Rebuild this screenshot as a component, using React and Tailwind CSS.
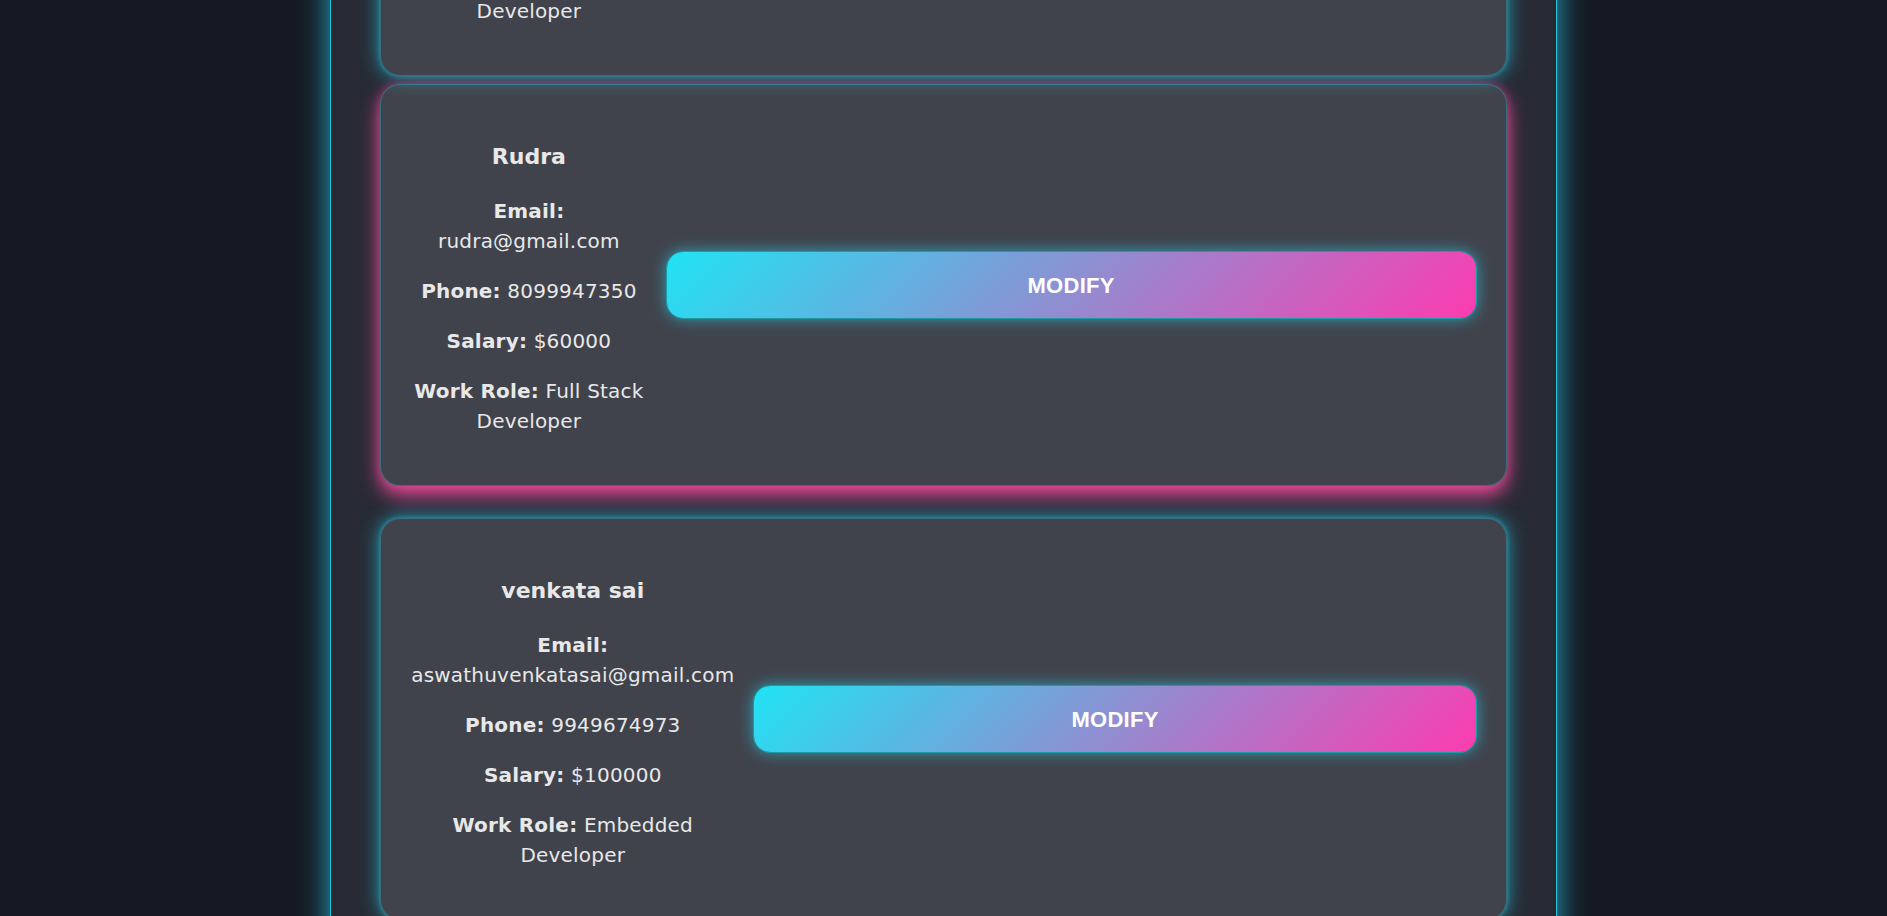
import React from "react";

const employees = [
  {
    name: "Aarav",
    email: "aarav@gmail.com",
    phone: "9876543210",
    salary: "$75000",
    role: "Full Stack Developer",
  },
  {
    name: "Rudra",
    email: "rudra@gmail.com",
    phone: "8099947350",
    salary: "$60000",
    role: "Full Stack Developer",
    active: true,
  },
  {
    name: "venkata sai",
    email: "aswathuvenkatasai@gmail.com",
    phone: "9949674973",
    salary: "$100000",
    role: "Embedded Developer",
  },
];

function Field({ label, value }) {
  return (
    <p className="text-[20px] leading-[30px] tracking-[0.2px]">
      <strong className="font-bold">{label}:</strong> {value}
    </p>
  );
}

function EmployeeCard({ employee }) {
  const active = employee.active;
  return (
    <div
      className={`flex items-center gap-5 rounded-[20px] border border-[#22d3ee]/30 bg-white/[0.12] p-[30px] ${
        active
          ? "-translate-y-3 shadow-[0_9px_20px_rgba(236,72,153,1),0_0_8px_rgba(236,72,153,0.45)]"
          : "shadow-[0_0_20px_rgba(34,211,238,0.7),0_0_4px_rgba(34,211,238,0.5)]"
      }`}
    >
      <div className="flex flex-col gap-5 pt-[23px] pb-[19px] text-center text-[#e8e8e8]">
        <h3 className="text-[22px] font-bold leading-[38px]">{employee.name}</h3>
        <Field label="Email" value={employee.email} />
        <Field label="Phone" value={employee.phone} />
        <Field label="Salary" value={employee.salary} />
        <Field label="Work Role" value={employee.role} />
      </div>
      <button
        type="button"
        className="h-[66px] w-[110%] rounded-[16px] bg-[linear-gradient(135deg,#20e3f4,#fd3bb0)] font-['Liberation_Sans',Arial,sans-serif] text-[22px] font-bold tracking-[0.3px] text-white shadow-[0_0_16px_rgba(34,211,238,0.7)] outline outline-1 outline-[#1aa8b0]/70"
      >
        MODIFY
      </button>
    </div>
  );
}

export default function App() {
  return (
    <div className="h-[916px] overflow-hidden bg-[#161923] font-['DejaVu_Sans',sans-serif]">
      <div className="mx-auto -mt-[346px] flex w-[65%] flex-col gap-5 border-x border-[#22c5d6] bg-[#272a34] px-[49px] pt-5 pb-10 shadow-[0_0_28px_rgba(34,211,238,0.8)]">
        {employees.map((employee) => (
          <EmployeeCard key={employee.email} employee={employee} />
        ))}
      </div>
    </div>
  );
}
